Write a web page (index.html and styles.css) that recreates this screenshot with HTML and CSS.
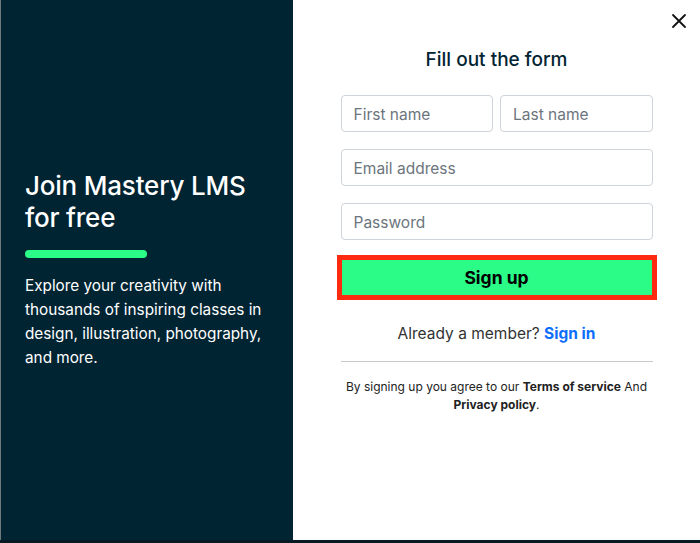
FILE: index.html
```html
<!DOCTYPE html>
<html lang="en">
<head>
<meta charset="utf-8">
<title>Sign up</title>
<link rel="stylesheet" href="styles.css">
</head>
<body>
<div class="modal">
  <aside class="promo">
    <h1 class="promo-title">Join Mastery LMS for free</h1>
    <div class="promo-bar"></div>
    <p class="promo-text">Explore your creativity with thousands of inspiring classes in design, illustration, photography, and more.</p>
  </aside>
  <main class="form-panel">
    <button class="close" aria-label="Close">
      <svg width="16" height="16" viewBox="0 0 16 16"><path d="M2 2L14 14M14 2L2 14" stroke="#111" stroke-width="1.8" stroke-linecap="round"/></svg>
    </button>
    <form class="form">
      <h2 class="form-title">Fill out the form</h2>
      <div class="row">
        <input class="field" type="text" placeholder="First name">
        <input class="field" type="text" placeholder="Last name">
      </div>
      <input class="field" type="email" placeholder="Email address">
      <input class="field" type="password" placeholder="Password">
      <button type="button" class="submit">Sign up</button>
      <p class="member">Already a member? <a href="#" class="signin">Sign in</a></p>
      <hr class="divider">
      <p class="terms">By signing up you agree to our <b>Terms of service</b> And <b>Privacy policy</b>.</p>
    </form>
  </main>
</div>
</body>
</html>
```
FILE: styles.css
```css
* { box-sizing: border-box; }
html, body { margin: 0; padding: 0; }
body {
  background: #071a23;
  font-family: Inter, "Noto Sans", "Liberation Sans", sans-serif;
  width: 700px;
  height: 543px;
  overflow: hidden;
}
.modal {
  display: flex;
  width: 700px;
  height: 540px;
  background: #fff;
}
.promo {
  width: 293px;
  flex: none;
  background: #012433;
  border-left: 1px solid #6f787c;
  padding: 0 24px;
  display: flex;
  flex-direction: column;
  justify-content: center;
  color: #fff;
}
.promo-title {
  margin: 0;
  font-size: 26px;
  line-height: 32px;
  font-weight: 500;
  letter-spacing: -0.2px;
}
.promo-bar {
  width: 122px;
  height: 8px;
  border-radius: 4px;
  background: #2bfb87;
  margin: 16px 0;
}
.promo-text {
  margin: 0;
  font-size: 15.3px;
  line-height: 24px;
}
.form-panel {
  flex: 1;
  position: relative;
  display: flex;
  justify-content: center;
}
.close {
  position: absolute;
  top: 13px;
  right: 13px;
  width: 16px;
  height: 16px;
  padding: 0;
  border: 0;
  background: none;
  display: flex;
}
.form {
  width: 312px;
  padding-top: 48px;
  display: flex;
  flex-direction: column;
  gap: 17px;
}
.form-title {
  margin: 0 0 6px;
  text-align: center;
  font-size: 19px;
  line-height: 24px;
  font-weight: 500;
  color: #012433;
}
.row {
  display: flex;
  gap: 7px;
}
.row .field { flex: 1; min-width: 0; }
.field {
  height: 37px;
  border: 1px solid #ced4da;
  border-radius: 4px;
  padding: 2px 12px 0;
  font: inherit;
  font-size: 15.5px;
  color: #212529;
  background: #fff;
}
.field::placeholder { color: #6c757d; }
.submit {
  margin: -2px -4px 0;
  height: 45px;
  border: 5px solid #ff2a0f;
  background: #2bfb87;
  font: inherit;
  font-size: 17.5px;
  font-weight: 700;
  color: #000;
  padding: 0;
}
.member {
  margin: 5px 0 0;
  text-align: center;
  font-size: 15.5px;
  line-height: 24px;
  color: #333;
}
.signin {
  color: #0d6efd;
  font-weight: 700;
  text-decoration: none;
}
.divider {
  margin: -2px 0 0;
  border: 0;
  border-top: 1px solid #c8c8c8;
}
.terms {
  margin: -1px 0 0;
  text-align: center;
  font-size: 12px;
  line-height: 18px;
  color: #222;
}
.terms b { font-weight: 700; }
```
